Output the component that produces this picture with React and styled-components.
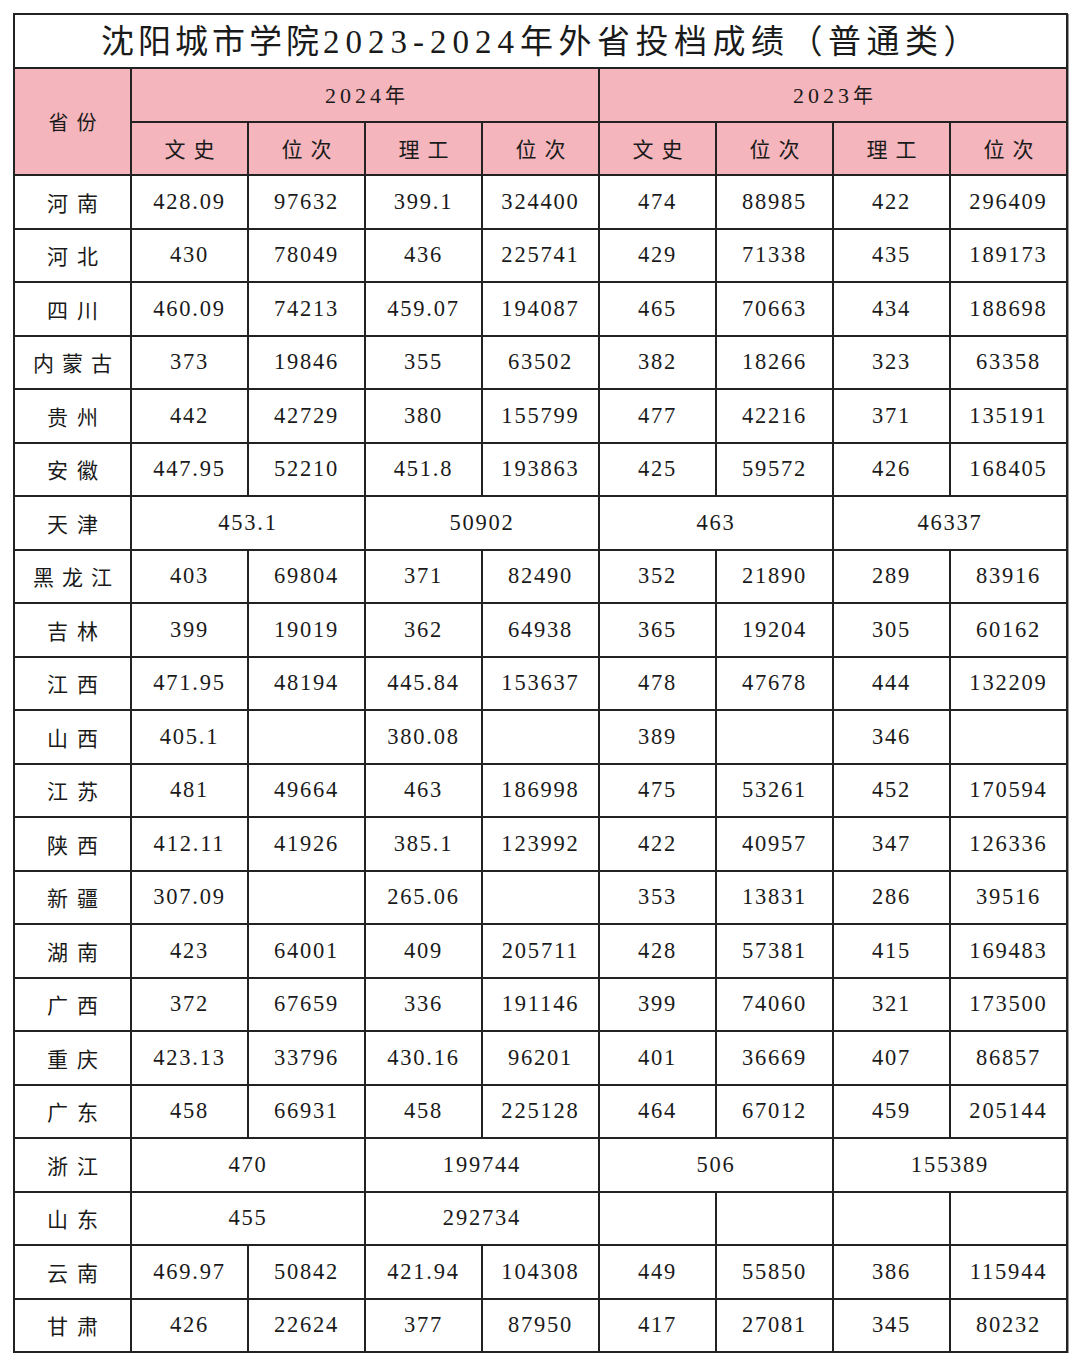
import React from "react";
import styled, { createGlobalStyle } from "styled-components";

const GlobalStyle = createGlobalStyle`
  html, body {
    margin: 0;
    padding: 0;
    background: #fff;
  }
`;

const Page = styled.div`
  padding: 13px 12px 0 13px;
  font-family: "Liberation Serif", "Noto Sans CJK SC", serif;
  color: #1a1a1a;
`;

const Table = styled.table`
  border-collapse: collapse;
  table-layout: fixed;
  width: 1054px;
  border: 2px solid #222;
  box-shadow: 1px 1px 0 #999;
`;

const Cell = styled.td`
  border: 2px solid #222;
  height: 51.5px;
  padding: 0;
  text-align: center;
  vertical-align: middle;
  font-size: 22.5px;
  letter-spacing: 1.8px;
  white-space: nowrap;
  background: ${(p) => (p.$head ? "#f4b5bc" : "#fff")};
`;

const TitleCell = styled(Cell)`
  height: 52px;
  font-size: 33px;
  letter-spacing: 6px;
  padding-right: 0;
  padding-left: 2px;
  line-height: 1;
`;

const Label = styled.span`
  font-family: "Noto Sans CJK SC", serif;
  font-size: ${(p) => (p.$big ? 21 : 20)}px;
  letter-spacing: ${(p) => p.$space}px;
  margin-right: -${(p) => p.$space}px;
`;

const TitleText = styled(Label)`
  font-size: 33px;
  margin-right: 0;
`;

const YearCell = styled(Cell)`
  font-size: 22px;
  letter-spacing: 4px;
`;

const Year = ({ y }) => (
  <>
    {y}
    <Label $space={0}>年</Label>
  </>
);

const rows = [
  ["河南", "428.09", "97632", "399.1", "324400", "474", "88985", "422", "296409"],
  ["河北", "430", "78049", "436", "225741", "429", "71338", "435", "189173"],
  ["四川", "460.09", "74213", "459.07", "194087", "465", "70663", "434", "188698"],
  ["内蒙古", "373", "19846", "355", "63502", "382", "18266", "323", "63358"],
  ["贵州", "442", "42729", "380", "155799", "477", "42216", "371", "135191"],
  ["安徽", "447.95", "52210", "451.8", "193863", "425", "59572", "426", "168405"],
  ["天津", ["453.1"], ["50902"], ["463"], ["46337"]],
  ["黑龙江", "403", "69804", "371", "82490", "352", "21890", "289", "83916"],
  ["吉林", "399", "19019", "362", "64938", "365", "19204", "305", "60162"],
  ["江西", "471.95", "48194", "445.84", "153637", "478", "47678", "444", "132209"],
  ["山西", "405.1", "", "380.08", "", "389", "", "346", ""],
  ["江苏", "481", "49664", "463", "186998", "475", "53261", "452", "170594"],
  ["陕西", "412.11", "41926", "385.1", "123992", "422", "40957", "347", "126336"],
  ["新疆", "307.09", "", "265.06", "", "353", "13831", "286", "39516"],
  ["湖南", "423", "64001", "409", "205711", "428", "57381", "415", "169483"],
  ["广西", "372", "67659", "336", "191146", "399", "74060", "321", "173500"],
  ["重庆", "423.13", "33796", "430.16", "96201", "401", "36669", "407", "86857"],
  ["广东", "458", "66931", "458", "225128", "464", "67012", "459", "205144"],
  ["浙江", ["470"], ["199744"], ["506"], ["155389"]],
  ["山东", ["455"], ["292734"], "", "", "", ""],
  ["云南", "469.97", "50842", "421.94", "104308", "449", "55850", "386", "115944"],
  ["甘肃", "426", "22624", "377", "87950", "417", "27081", "345", "80232"],
];

const subHeads = ["文史", "位次", "理工", "位次", "文史", "位次", "理工", "位次"];

export default function App() {
  return (
    <Page>
      <GlobalStyle />
      <Table>
        <colgroup>
          <col style={{ width: 117 }} />
          {subHeads.map((_, i) => (
            <col key={i} style={{ width: 117 }} />
          ))}
        </colgroup>
        <tbody>
          <tr>
            <TitleCell colSpan={9}>
              <TitleText $space={4}>沈阳城市学院</TitleText>
              2023-2024
              <TitleText $space={5.5}>年外省投档成绩（普通类）</TitleText>
            </TitleCell>
          </tr>
          <tr>
            <Cell $head rowSpan={2}>
              <Label $space={8}>省份</Label>
            </Cell>
            <YearCell $head colSpan={4}>
              <Year y="2024" />
            </YearCell>
            <YearCell $head colSpan={4}>
              <Year y="2023" />
            </YearCell>
          </tr>
          <tr>
            {subHeads.map((h, i) => (
              <Cell $head key={i}>
                <Label $big $space={8}>{h}</Label>
              </Cell>
            ))}
          </tr>
          {rows.map(([name, ...cells]) => (
            <tr key={name}>
              <Cell>
                <Label $big $space={name.length > 2 ? 8 : 9}>{name}</Label>
              </Cell>
              {cells.map((c, i) =>
                Array.isArray(c) ? (
                  <Cell key={i} colSpan={2}>{c[0]}</Cell>
                ) : (
                  <Cell key={i}>{c}</Cell>
                )
              )}
            </tr>
          ))}
        </tbody>
      </Table>
    </Page>
  );
}
